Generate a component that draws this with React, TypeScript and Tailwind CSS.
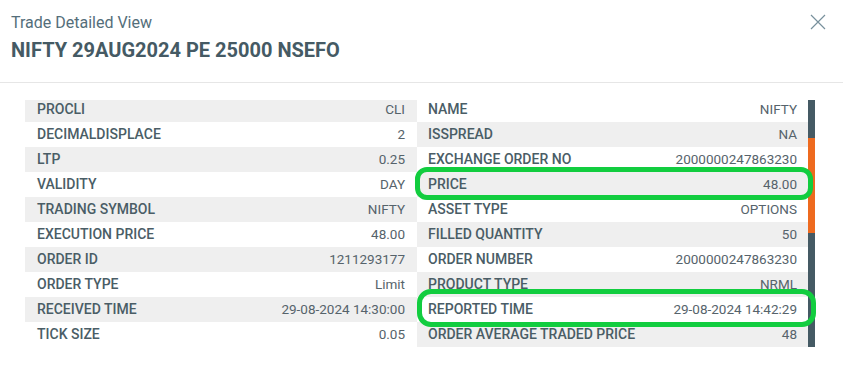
import React from "react";

type Row = { label: string; value: string };

const LEFT: Row[] = [
  { label: "PROCLI", value: "CLI" },
  { label: "DECIMALDISPLACE", value: "2" },
  { label: "LTP", value: "0.25" },
  { label: "VALIDITY", value: "DAY" },
  { label: "TRADING SYMBOL", value: "NIFTY" },
  { label: "EXECUTION PRICE", value: "48.00" },
  { label: "ORDER ID", value: "1211293177" },
  { label: "ORDER TYPE", value: "Limit" },
  { label: "RECEIVED TIME", value: "29-08-2024 14:30:00" },
  { label: "TICK SIZE", value: "0.05" },
];

const RIGHT: Row[] = [
  { label: "NAME", value: "NIFTY" },
  { label: "ISSPREAD", value: "NA" },
  { label: "EXCHANGE ORDER NO", value: "2000000247863230" },
  { label: "PRICE", value: "48.00" },
  { label: "ASSET TYPE", value: "OPTIONS" },
  { label: "FILLED QUANTITY", value: "50" },
  { label: "ORDER NUMBER", value: "2000000247863230" },
  { label: "PRODUCT TYPE", value: "NRML" },
  { label: "REPORTED TIME", value: "29-08-2024 14:42:29" },
  { label: "ORDER AVERAGE TRADED PRICE", value: "48" },
];

function DetailRow({ row, shaded, pad }: { row: Row; shaded: boolean; pad: string }) {
  return (
    <div
      className={`flex h-[25px] items-center justify-between ${pad} ${
        shaded ? "bg-[#efefef]" : "bg-white"
      }`}
    >
      <span className="pb-[2px] text-[14px] font-medium leading-none text-[#4a5d66]">
        {row.label}
      </span>
      <span className="text-[13.5px] leading-none text-[#56636b]">{row.value}</span>
    </div>
  );
}

export default function App() {
  return (
    <div className="relative h-[372px] w-[843px] overflow-hidden bg-white font-['Roboto',sans-serif]">
      {/* header */}
      <div className="relative h-[83px] border-b border-[#e6e6e6] px-[11px] pt-[13px]">
        <p className="text-[16px] leading-[20px] text-[#546e7a]">Trade Detailed View</p>
        <h1 className="mt-[5px] text-[20px] font-bold leading-[24px] text-[#455a64]">
          NIFTY 29AUG2024 PE 25000 NSEFO
        </h1>
        <button className="absolute right-[17px] top-[14px] text-[#78909c]" aria-label="Close">
          <svg width="16" height="16" viewBox="0 0 16 16" fill="none">
            <path d="M1 1L15 15M15 1L1 15" stroke="currentColor" strokeWidth="1.2" />
          </svg>
        </button>
      </div>

      {/* body */}
      <div className="pl-[25px] pt-[17px]">
        <div className="flex h-[247px] w-[790px] overflow-hidden">
          <div className="-mt-[3px] flex">
            <div className="w-[392px]">
              {LEFT.map((r, i) => (
                <DetailRow key={r.label} row={r} shaded={i % 2 === 0} pad="px-[12px]" />
              ))}
            </div>
            <div className="w-[391px]">
              {RIGHT.map((r, i) => (
                <DetailRow key={r.label} row={r} shaded={i % 2 === 1} pad="px-[11px]" />
              ))}
            </div>
          </div>
          <div className="flex w-[7px] flex-col bg-[#455a64]">
            <div className="h-[38px]" />
            <div className="h-[95px] bg-[#ee6a1f]" />
          </div>
        </div>
      </div>

      {/* annotations */}
      <div className="absolute left-[415px] top-[167px] h-[33px] w-[398px] rounded-[12px] border-[5px] border-[#12cd3f]" />
      <div className="absolute left-[417px] top-[289px] h-[38px] w-[399px] rounded-[14px] border-[5px] border-[#12cd3f]" />
    </div>
  );
}
